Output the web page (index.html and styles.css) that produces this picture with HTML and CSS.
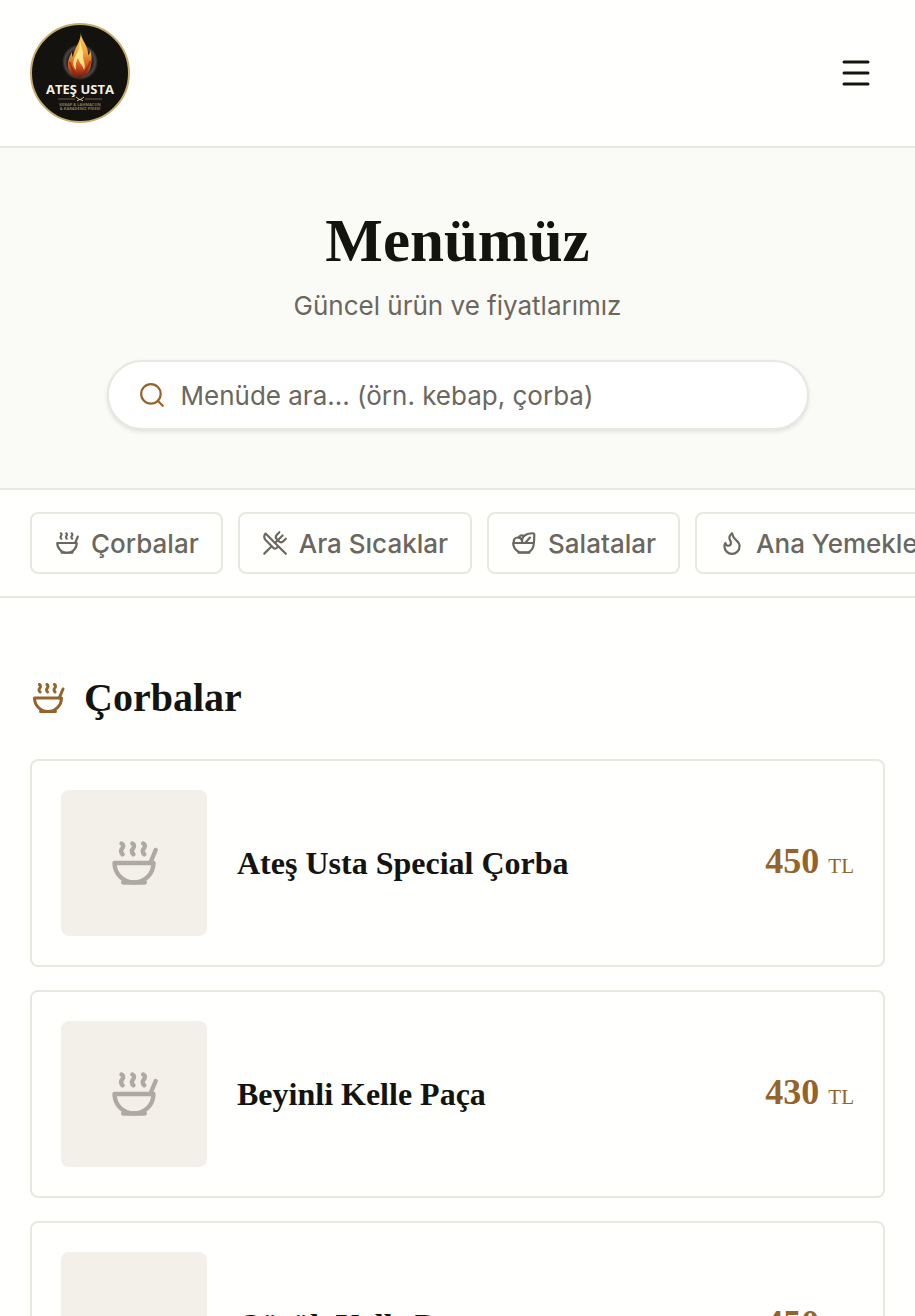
FILE: index.html
```
<!DOCTYPE html>
<html lang="tr">

<head>
    <meta charset="UTF-8">
    <meta name="viewport" content="width=device-width, initial-scale=1.0">
    <title>Menümüz - Ateş Usta</title>
    <link rel="stylesheet" href="styles.css">
</head>

<body>
    <svg class="sprite" aria-hidden="true">
        <symbol id="soup" viewBox="0 0 24 24">
            <path d="M12 21a9 9 0 0 0 9-9H3a9 9 0 0 0 9 9Z" />
            <path d="M7 21h10" />
            <path d="M19.5 12 22 6" />
            <path d="M16.25 3c.27.1.8.53.75 1.36-.06.83-.93 1.2-1 2.02-.05.78.34 1.24.73 1.62" />
            <path d="M11.25 3c.27.1.8.53.74 1.36-.05.83-.93 1.2-.98 2.02-.06.78.33 1.24.72 1.62" />
            <path d="M6.25 3c.27.1.8.53.75 1.36-.06.83-.93 1.2-1 2.02-.05.78.34 1.24.74 1.62" />
        </symbol>
        <symbol id="utensils" viewBox="0 0 24 24">
            <path d="m16 2-2.3 2.3a3 3 0 0 0 0 4.2l1.8 1.8a3 3 0 0 0 4.2 0L22 8" />
            <path d="M15 15 3.3 3.3a4.2 4.2 0 0 0 0 6l7.3 7.3c.7.7 2 .7 2.8 0L15 15Zm0 0 7 7" />
            <path d="m2.1 21.8 6.4-6.3" />
            <path d="m19 5-7 7" />
        </symbol>
        <symbol id="salad" viewBox="0 0 24 24">
            <path d="M2 12h19c0 4-1.500 6.500-4.500 8.500h-9C4 18.500 2 16 2 12Z" />
            <path d="M7 21h10" />
            <path d="M3 12C1.500 9 4 6.500 7 7c1-2 3-2.500 5-1.500" />
            <path d="M10.500 12C9 6 14 3 20 3c1 0 1.500.5 1.500 1.500 0 3 0 5-.5 7.500" />
            <path d="m13.500 11.500 4-4.500" />
            <path d="M7 7c1.500 0 2.500 1 3 2.500" />
        </symbol>
        <symbol id="flame" viewBox="0 0 24 24">
            <path d="M8.5 14.5A2.5 2.5 0 0 0 11 12c0-1.38-.5-2-1-3-1.072-2.143-.224-4.054 2-6 .5 2.5 2 4.9 4 6.5 2 1.6 3 3.5 3 5.5a7 7 0 1 1-14 0c0-1.153.433-2.294 1-3a2.5 2.5 0 0 0 2.5 2.5z" />
        </symbol>
    </svg>

    <header class="header">
        <a class="logo" href="#" aria-label="Ateş Usta">
            <svg viewBox="0 0 102 102">
                <defs>
                    <linearGradient id="fire" x1="0" y1="0" x2="0" y2="1">
                        <stop offset="0" stop-color="#f9cf55" />
                        <stop offset="0.45" stop-color="#f3a33a" />
                        <stop offset="0.75" stop-color="#d3521f" />
                        <stop offset="1" stop-color="#5e1a10" />
                    </linearGradient>
                    <radialGradient id="ring">
                        <stop offset="0.6" stop-color="#15130f" />
                        <stop offset="0.85" stop-color="#4a4848" />
                        <stop offset="1" stop-color="#15130f" />
                    </radialGradient>
                </defs>
                <circle cx="50" cy="51" r="49" fill="#13120f" stroke="#c9ab6c" stroke-width="2" />
                <circle cx="50" cy="40" r="18" fill="url(#ring)" />
                <path d="M51 10c-1 7 8 14 7 23 2-1 2-3 2-5 2 5 2 10 1 15-1 8-6 13-12 13-7 0-11-6-11-13 0-6 2-9 4-13 0 2 0 4 1 5 1-9 8-15 8-25Z" fill="url(#fire)" />
                <path d="M50 17c0 7 4 11 3 17 0 5 3 8 1 14-1-5-5-7-6-12-2 4-3 7-2 12-4-5-3-10 0-15 3-5 4-10 4-16Z" fill="#ffe48c" />
                <path d="M40 40c0 7 5 9 6 15M60 39c0 6-5 8-7 16" fill="none" stroke="#8f2812" stroke-width="2" opacity="0.7" />
                <text class="logo-name" x="50" y="72" text-anchor="middle">ATEŞ USTA</text>
                <path d="M28 77h17M55 77h17" stroke="#6e6045" stroke-width="1" />
                <path d="m46 75 4 3 4-3M47 79l3-2 3 2" fill="none" stroke="#d8c79a" stroke-width="1" />
                <text class="logo-sub" x="50" y="84" text-anchor="middle">KEBAP &amp; LAHMACUN</text>
                <text class="logo-sub" x="50" y="88" text-anchor="middle">&amp; KARADENİZ PİDESİ</text>
            </svg>
        </a>
        <button class="menu-toggle" aria-label="Menüyü aç">
            <svg viewBox="0 0 32 32">
                <path d="M4 5h24M4 16h24M4 27h24" />
            </svg>
        </button>
    </header>

    <section class="hero">
        <h1>Menümüz</h1>
        <p>Güncel ürün ve fiyatlarımız</p>
        <label class="search">
            <svg class="icon" viewBox="0 0 24 24">
                <circle cx="11" cy="11" r="9" />
                <path d="m22 22-4.500-4.500" />
            </svg>
            <input type="search" placeholder="Menüde ara... (örn. kebap, çorba)" aria-label="Menüde ara">
        </label>
    </section>

    <nav class="tabs">
        <a class="tab" href="#corbalar"><svg class="icon"><use href="#soup" /></svg>Çorbalar</a>
        <a class="tab" href="#ara-sicaklar"><svg class="icon"><use href="#utensils" /></svg>Ara Sıcaklar</a>
        <a class="tab" href="#salatalar"><svg class="icon"><use href="#salad" /></svg>Salatalar</a>
        <a class="tab" href="#ana-yemekler"><svg class="icon"><use href="#flame" /></svg>Ana Yemekler</a>
    </nav>

    <main class="menu" id="corbalar">
        <h2><svg class="icon"><use href="#soup" /></svg>Çorbalar</h2>
        <div class="items">
            <article class="item">
                <div class="thumb"><svg class="icon"><use href="#soup" /></svg></div>
                <h3>Ateş Usta Special Çorba</h3>
                <p class="price">450 <span>TL</span></p>
            </article>
            <article class="item">
                <div class="thumb"><svg class="icon"><use href="#soup" /></svg></div>
                <h3>Beyinli Kelle Paça</h3>
                <p class="price">430 <span>TL</span></p>
            </article>
            <article class="item">
                <div class="thumb"></div>
                <h3>Gözük Kelle Paça</h3>
                <p class="price">450 <span>TL</span></p>
            </article>
        </div>
    </main>
</body>

</html>
```
FILE: styles.css
```
* {
    box-sizing: border-box;
}

body {
    margin: 0;
    background-color: #fffffe;
    color: #14140f;
    font-family: Inter, sans-serif;
    overflow-x: hidden;
}

h1,
h2,
h3,
p {
    margin: 0;
}

h1,
h2,
h3,
.price {
    font-family: "Liberation Serif", serif;
    font-weight: bold;
}

.sprite {
    display: none;
}

.icon {
    width: 26px;
    height: 26px;
    flex-shrink: 0;
    fill: none;
    stroke: currentColor;
    stroke-width: 2;
    stroke-linecap: round;
    stroke-linejoin: round;
}

.header {
    display: flex;
    align-items: center;
    justify-content: space-between;
    padding: 22px 30px;
    border-bottom: 2px solid #e8e8e1;
}

.logo,
.logo svg {
    display: block;
    width: 102px;
    height: 102px;
}

.logo-name {
    font: bold 13px "Open Sans", sans-serif;
    fill: #f6efdf;
}

.logo-sub {
    font: bold 4px "Open Sans", sans-serif;
    fill: #8a774f;
}

.menu-toggle {
    display: flex;
    padding: 13px;
    border: none;
    background: none;
    cursor: pointer;
}

.menu-toggle svg {
    width: 32px;
    height: 32px;
    fill: none;
    stroke: #14140f;
    stroke-width: 3;
    stroke-linecap: round;
}

.hero {
    display: flex;
    flex-direction: column;
    align-items: center;
    padding: 58px 30px;
    background-color: #fafaf6;
    border-bottom: 2px solid #e8e8e1;
}

.hero h1 {
    font-size: 61px;
    line-height: 70px;
}

.hero p {
    margin: 10px 0 34px;
    color: #6b675e;
    font-size: 26px;
    line-height: 40px;
}

.search {
    display: flex;
    align-items: center;
    gap: 16px;
    width: 100%;
    max-width: 702px;
    height: 70px;
    padding: 0 30px;
    background-color: #ffffff;
    border: 2px solid #e8e8e1;
    border-radius: 35px;
    box-shadow: 0 2px 4px rgba(0, 0, 0, 0.1);
    color: #93642b;
}

.search input {
    flex: 1;
    min-width: 0;
    padding: 0;
    border: none;
    outline: none;
    background: none;
    color: #14140f;
    font-family: inherit;
    font-size: 26px;
}

.search input::placeholder {
    color: #6b675e;
}

.tabs {
    display: flex;
    gap: 15px;
    padding: 22px 30px;
    border-bottom: 2px solid #e8e8e1;
    overflow: hidden;
}

.tab {
    display: flex;
    align-items: center;
    gap: 11px;
    flex-shrink: 0;
    height: 62px;
    padding: 0 22px;
    border: 2px solid #e8e8e1;
    border-radius: 8px;
    color: #6b675e;
    font-size: 26px;
    font-weight: 500;
    text-decoration: none;
    white-space: nowrap;
}

.menu {
    padding: 75px 30px;
}

.menu h2 {
    display: flex;
    align-items: center;
    gap: 18px;
    margin-bottom: 36px;
    font-size: 40px;
    line-height: 50px;
}

.menu h2 .icon {
    width: 36px;
    height: 36px;
    color: #93642b;
}

.items {
    display: flex;
    flex-direction: column;
    gap: 23px;
}

.item {
    display: flex;
    align-items: center;
    gap: 30px;
    padding: 29px;
    border: 2px solid #e8e8e1;
    border-radius: 8px;
}

.thumb {
    display: flex;
    align-items: center;
    justify-content: center;
    flex-shrink: 0;
    width: 146px;
    height: 146px;
    background-color: #f3f0ea;
    border-radius: 8px;
}

.thumb .icon {
    width: 52px;
    height: 52px;
    color: #6b675e;
    opacity: 0.5;
}

.item h3 {
    flex: 1;
    font-size: 32px;
    line-height: 36px;
}

.price {
    color: #93642b;
    font-size: 36px;
    line-height: 40px;
    white-space: nowrap;
}

.price span {
    font-size: 21px;
    font-weight: normal;
}
```
